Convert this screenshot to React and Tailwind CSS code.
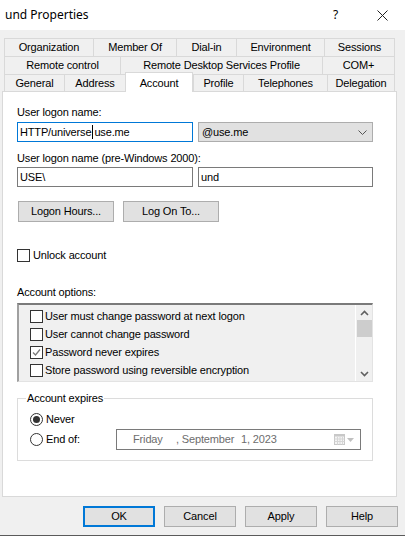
import React from "react";

const tabRows = [
  [
    { label: "Organization", w: "w-[89px]" },
    { label: "Member Of", w: "w-[83px]" },
    { label: "Dial-in", w: "w-[60px]" },
    { label: "Environment", w: "w-[88px]" },
    { label: "Sessions", w: "w-[71px]" },
  ],
  [
    { label: "Remote control", w: "w-[116px]" },
    { label: "Remote Desktop Services Profile", w: "w-[202px]" },
    { label: "COM+", w: "w-[73px]" },
  ],
];

const bottomTabs = [
  { label: "General", w: "w-[60px]" },
  { label: "Address", w: "w-[61px]" },
  { label: "Account", w: "w-[68px]", active: true },
  { label: "Profile", w: "w-[50px]" },
  { label: "Telephones", w: "w-[84px]" },
  { label: "Delegation", w: "w-[68px]" },
];

const options = [
  { label: "User must change password at next logon", checked: false },
  { label: "User cannot change password", checked: false },
  { label: "Password never expires", checked: true },
  { label: "Store password using reversible encryption", checked: false },
];

function CheckBox({ checked }) {
  return (
    <span className="w-[13px] h-[13px] border border-[#333333] bg-white flex items-center justify-center shrink-0">
      {checked && (
        <svg width="9" height="9" viewBox="0 0 9 9">
          <polyline points="1,4.5 3.5,7 8,1.5" fill="none" stroke="#7a7a7a" strokeWidth="1.3" />
        </svg>
      )}
    </span>
  );
}

function Radio({ checked }) {
  return (
    <span className="w-[13px] h-[13px] rounded-full border border-[#333333] bg-white flex items-center justify-center shrink-0">
      {checked && <span className="w-[7px] h-[7px] rounded-full bg-[#333333]" />}
    </span>
  );
}

function Chevron({ up }) {
  return (
    <svg width="9" height="6" viewBox="0 0 9 6">
      <polyline
        points={up ? "1,5 4.5,1.5 8,5" : "1,1 4.5,4.5 8,1"}
        fill="none"
        stroke="#606060"
        strokeWidth="1.6"
      />
    </svg>
  );
}

function Btn({ children, width, primary }) {
  return (
    <div
      className={`${width} h-[21px] bg-[#e1e1e1] flex items-center justify-center ${
        primary ? "border-2 border-[#0078d7]" : "border border-[#adadad]"
      }`}
    >
      {children}
    </div>
  );
}

export default function App() {
  return (
    <div className="w-[405px] h-[536px] bg-[#f0f0f0] flex flex-col text-[11px] tracking-[-0.15px] text-black font-['Liberation_Sans',Arial,sans-serif] overflow-hidden">
      {/* title bar */}
      <div className="h-[30px] bg-white flex items-center shrink-0">
        <span className="pl-[5px] text-[12px] tracking-normal font-['Noto_Sans',sans-serif]">und Properties</span>
        <span className="ml-auto text-[12px] font-['Noto_Sans',sans-serif]">?</span>
        <span className="ml-[39px] mr-[17px] flex items-center">
          <svg width="11" height="11" viewBox="0 0 11 11">
            <path d="M0.5 0.5 L10.5 10.5 M10.5 0.5 L0.5 10.5" stroke="#222" strokeWidth="1" />
          </svg>
        </span>
      </div>

      {/* tabs */}
      <div className="mt-[8px] ml-[4px] flex flex-col">
        {tabRows.map((row, i) => (
          <div key={i} className="h-[18px] flex">
            {row.map((t, j) => (
              <div
                key={t.label}
                className={`${t.w} border-t border-l border-[#d9d9d9] ${
                  j === row.length - 1 ? "border-r" : ""
                } flex items-center justify-center bg-[#f0f0f0]`}
              >
                {t.label}
              </div>
            ))}
          </div>
        ))}
        <div className="h-[17px] flex items-end">
          {bottomTabs.map((t, j) =>
            t.active ? (
              <div
                key={t.label}
                className={`${t.w} h-[20px] -mb-px relative z-10 bg-white border-t border-l border-r border-[#d9d9d9] flex justify-center pt-[2px]`}
              >
                {t.label}
              </div>
            ) : (
              <div
                key={t.label}
                className={`${t.w} h-[17px] border-t border-l border-[#d9d9d9] ${
                  j === bottomTabs.length - 1 ? "border-r" : ""
                } flex items-center justify-center`}
              >
                {t.label}
              </div>
            )
          )}
        </div>
      </div>

      {/* account page */}
      <div className="ml-[2px] w-[395px] h-[406px] shrink-0 bg-white border border-[#d9d9d9] flex flex-col pl-[14px]">
        <div className="mt-[13px] leading-[14px]">User logon name:</div>
        <div className="mt-[3px] h-[20px] flex gap-[5px]">
          <div className="w-[176px] h-[20px] border border-[#0078d7] flex items-center pl-[2px]">
            <span>HTTP/universe</span>
            <span className="w-px h-[14px] bg-black mx-[1px]" />
            <span>use.me</span>
          </div>
          <div className="w-[175px] h-[20px] border border-[#adadad] bg-[#e1e1e1] flex items-center pl-[3px] pr-[5px]">
            <span>@use.me</span>
            <span className="ml-auto flex">
              <svg width="9" height="5" viewBox="0 0 9 5">
                <polyline points="0.5,0.5 4.5,4.5 8.5,0.5" fill="none" stroke="#555" strokeWidth="1" />
              </svg>
            </span>
          </div>
        </div>

        <div className="mt-[9px] leading-[14px]">User logon name (pre-Windows 2000):</div>
        <div className="mt-[2px] h-[20px] flex gap-[5px]">
          <div className="w-[176px] h-[20px] border border-[#7a7a7a] flex items-center pl-[2px]">USE\</div>
          <div className="w-[175px] h-[20px] border border-[#7a7a7a] flex items-center pl-[2px]">und</div>
        </div>

        <div className="mt-[14px] ml-px flex gap-[9px]">
          <Btn width="w-[96px]">Logon Hours...</Btn>
          <Btn width="w-[96px]">Log On To...</Btn>
        </div>

        <div className="mt-[26px] h-[14px] flex items-center gap-[3px]">
          <CheckBox />
          <span>Unlock account</span>
        </div>

        <div className="mt-[23px] leading-[14px]">Account options:</div>
        <div className="mt-[4px] w-[356px] h-[79px] flex bg-[#f0f0f0] border-t-2 border-l-2 border-r border-b border-t-[#7a7a7a] border-l-[#a0a0a0] border-r-[#e3e3e3] border-b-[#e3e3e3]">
          <div className="flex-1 flex flex-col pt-[2px] pl-[11px]">
            {options.map((o) => (
              <div key={o.label} className="h-[18px] flex items-center gap-[2px]">
                <CheckBox checked={o.checked} />
                <span>{o.label}</span>
              </div>
            ))}
          </div>
          <div className="w-[17px] border-l border-white flex flex-col items-center">
            <div className="h-[15px] flex items-center justify-center">
              <Chevron up />
            </div>
            <div className="w-[15px] h-[17px] bg-[#cdcdcd]" />
            <div className="mt-auto h-[15px] flex items-center justify-center">
              <Chevron />
            </div>
          </div>
        </div>

        <fieldset className="mt-[9px] w-[356px] h-[70px] border border-[#dcdcdc] pl-[12px]">
          <legend className="-ml-[4px] px-[1px] leading-[14px]">Account expires</legend>
          <div className="mt-[7px] h-[14px] flex items-center gap-[3px]">
            <Radio checked />
            <span>Never</span>
          </div>
          <div className="mt-[3px] h-[21px] flex items-center">
            <div className="w-[86px] flex items-center gap-[3px]">
              <Radio />
              <span>End of:</span>
            </div>
            <div className="w-[245px] h-[21px] border border-[#7a7a7a] flex items-center text-[#6d6d6d]">
              <span className="ml-[16px] w-[43px]">Friday</span>
              <span className="w-[65px]">, September</span>
              <span>1, 2023</span>
              <span className="ml-auto mr-[6px] flex items-center gap-[2px]">
                <svg width="11" height="11" viewBox="0 0 11 11">
                  <rect x="0.5" y="0.5" width="10" height="10" fill="#f4f4f4" stroke="#c8c8c8" />
                  <rect x="0.5" y="0.5" width="10" height="2" fill="#c8c8c8" />
                  <path d="M3.5 3 V10.5 M6 3 V10.5 M8.5 3 V10.5 M0.5 5 H10.5 M0.5 7.5 H10.5" stroke="#d6d6d6" strokeWidth="1" />
                </svg>
                <svg width="7" height="4" viewBox="0 0 7 4">
                  <polygon points="0,0 7,0 3.5,4" fill="#c0c0c0" />
                </svg>
              </span>
            </div>
          </div>
        </fieldset>
      </div>

      {/* dialog buttons */}
      <div className="mt-[9px] flex justify-end gap-[9px] pr-[7px]">
        <Btn width="w-[72px]" primary>OK</Btn>
        <Btn width="w-[72px]">Cancel</Btn>
        <Btn width="w-[72px]">Apply</Btn>
        <Btn width="w-[72px]">Help</Btn>
      </div>

      <div className="mt-auto h-px bg-[#5a5a5a]" />
    </div>
  );
}
